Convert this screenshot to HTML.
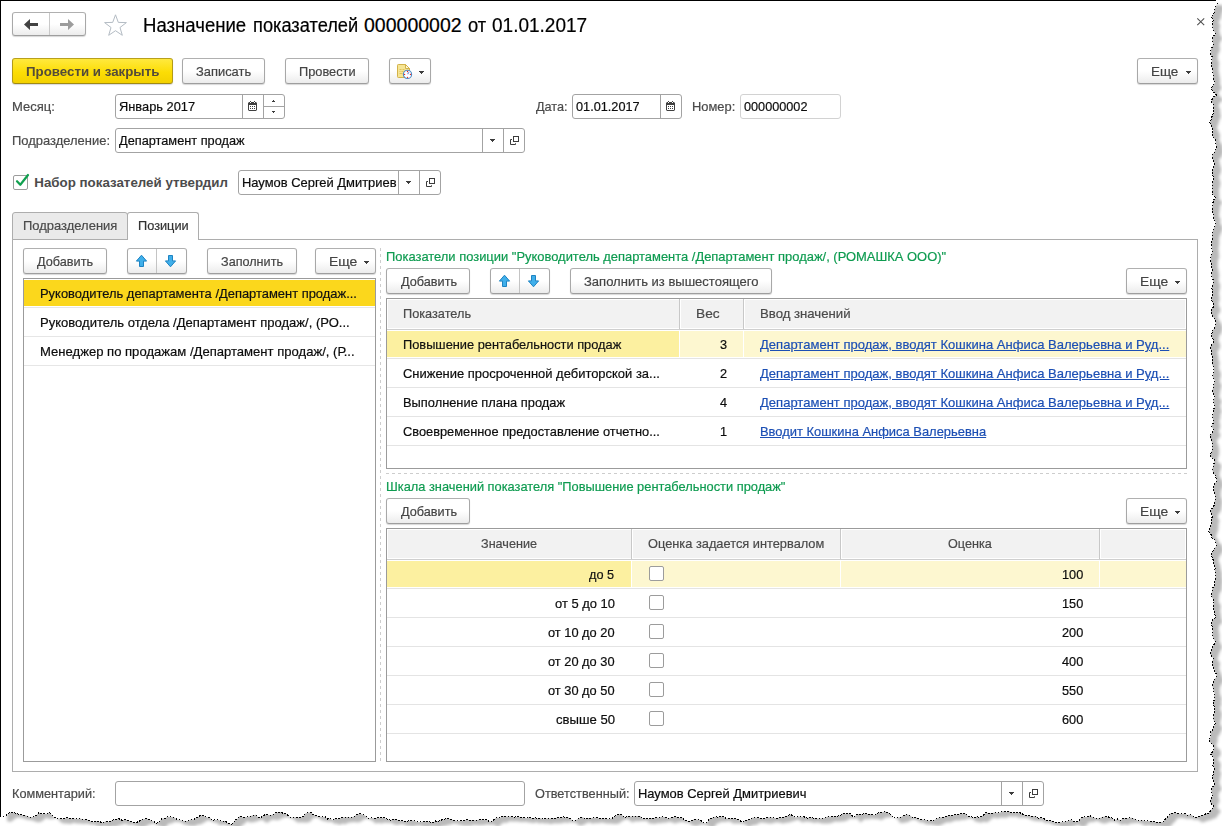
<!DOCTYPE html>
<html lang="ru">
<head>
<meta charset="utf-8">
<title>Назначение показателей 000000002 от 01.01.2017</title>
<style>
*{box-sizing:border-box;margin:0;padding:0}
html,body{width:1222px;height:826px;overflow:hidden;background:#fff}
body{font-family:"Liberation Sans",Arial,sans-serif;font-size:13.33px;color:#4a4a4a;position:relative}
.a{position:absolute}
.t{position:absolute;white-space:nowrap;line-height:16px;transform-origin:0 0;-webkit-text-stroke:0.2px currentColor}
.btn{position:absolute;height:26px;border:1px solid #a8a8a8;border-color:#b0b0b0 #a8a8a8 #9e9e9e;border-radius:3px;background:linear-gradient(#fff 0%,#fff 50%,#ececec 100%);box-shadow:0 1px 1px rgba(0,0,0,.16)}
.btn.y{background:linear-gradient(#ffe93e 0%,#fcdd05 55%,#f3d100 100%);border-color:#b8a01c #b39b17 #a08a12;box-shadow:0 1px 1px rgba(40,40,60,.18)}
.inp{position:absolute;height:25px;border:1px solid #a3a3a3;border-radius:3px;background:#fff}
.v{position:absolute;width:1px;background:#a3a3a3}
.hl{position:absolute;height:1px}
.cb{position:absolute;width:15px;height:15px;border:1px solid #9c9c9c;border-radius:2px;background:#fff}
.tbl{position:absolute;border:1px solid #9b9b9b;background:#fff}
svg{position:absolute;overflow:visible}

</style>
</head>
<body>
<svg style="left:0;top:0" width="1222" height="826" viewBox="0 0 1222 826"><defs><filter id="sh" x="-2%" y="-2%" width="104%" height="104%"><feGaussianBlur stdDeviation="1.6"/></filter></defs><path d="M0 0 L1215.4 0.0 L1217.1 3.4 L1215.4 7.6 L1214.4 10.2 L1214.0 13.6 L1211.5 16.9 L1213.2 20.3 L1212.3 25.4 L1213.2 29.7 L1215.7 33.9 L1213.2 36.4 L1212.3 40.7 L1213.2 44.1 L1212.4 46.8 L1211.0 49.2 L1210.6 54.2 L1212.0 56.6 L1212.0 59.3 L1211.5 64.4 L1212.3 69.5 L1213.2 74.6 L1213.2 79.7 L1214.9 83.1 L1212.3 86.4 L1211.5 89.0 L1214.0 92.4 L1216.6 94.9 L1214.3 96.4 L1212.3 98.3 L1211.5 101.7 L1213.2 104.0 L1213.2 106.8 L1214.0 111.9 L1212.3 115.3 L1211.5 118.6 L1209.8 122.9 L1211.5 126.3 L1213.2 130.5 L1212.3 133.9 L1213.2 137.3 L1215.4 140.0 L1215.9 143.8 L1216.6 147.6 L1215.3 150.0 L1214.3 152.6 L1212.0 154.4 L1212.6 157.4 L1213.2 160.3 L1214.4 164.1 L1213.7 168.0 L1212.0 171.4 L1212.5 174.4 L1213.6 177.5 L1213.2 180.7 L1212.0 184.9 L1212.3 189.2 L1212.3 194.2 L1214.5 195.9 L1215.4 198.5 L1213.2 200.2 L1212.9 204.0 L1212.3 207.8 L1212.0 211.2 L1213.7 214.5 L1213.2 218.0 L1215.7 222.2 L1215.4 225.3 L1214.0 228.1 L1212.3 232.4 L1212.1 235.3 L1212.3 238.3 L1211.5 243.4 L1212.0 248.5 L1212.3 252.7 L1210.8 255.5 L1211.0 258.6 L1210.6 261.2 L1211.5 265.4 L1212.3 270.5 L1211.5 275.6 L1213.2 280.0 L1213.2 282.5 L1212.4 285.5 L1212.0 288.5 L1212.5 291.8 L1212.7 295.3 L1211.4 298.1 L1212.0 301.2 L1213.5 304.0 L1213.2 307.1 L1211.0 309.7 L1211.0 312.8 L1212.3 315.6 L1214.4 318.8 L1215.7 322.4 L1215.4 324.9 L1214.5 328.2 L1212.3 330.8 L1211.5 335.9 L1213.1 339.1 L1213.2 342.7 L1210.3 346.9 L1211.3 350.7 L1211.5 354.6 L1212.7 358.0 L1211.9 361.3 L1212.3 364.7 L1213.8 367.5 L1214.0 370.7 L1213.2 373.6 L1212.7 376.6 L1214.9 380.8 L1213.8 383.7 L1213.2 386.8 L1212.3 391.9 L1213.8 394.3 L1214.9 396.9 L1213.2 400.3 L1213.9 403.8 L1214.9 407.1 L1213.2 409.7 L1213.6 412.8 L1212.3 415.6 L1213.2 420.0 L1213.2 423.2 L1211.5 425.9 L1213.7 430.2 L1212.2 433.1 L1209.8 435.3 L1210.3 437.9 L1211.5 440.3 L1212.1 443.7 L1212.3 447.1 L1212.0 450.3 L1210.8 453.3 L1210.3 456.4 L1212.4 458.1 L1214.4 459.8 L1214.2 462.9 L1213.2 465.8 L1212.3 470.0 L1213.5 473.3 L1215.7 475.9 L1216.6 481.0 L1214.9 483.4 L1214.0 486.1 L1213.7 491.2 L1215.0 494.5 L1215.4 498.0 L1214.7 501.3 L1214.4 504.7 L1213.1 507.3 L1211.2 509.5 L1210.6 512.4 L1212.7 515.8 L1211.6 518.6 L1211.5 521.7 L1211.3 524.7 L1210.3 527.6 L1208.9 531.9 L1211.5 535.3 L1212.0 538.0 L1214.8 539.4 L1215.4 542.0 L1216.6 545.4 L1215.0 548.1 L1213.2 550.5 L1211.9 552.9 L1211.5 555.6 L1213.2 560.0 L1214.0 565.1 L1215.1 568.0 L1214.9 571.0 L1215.7 576.1 L1215.3 579.1 L1214.9 582.0 L1214.8 585.4 L1212.6 588.1 L1212.0 591.4 L1211.5 596.4 L1214.0 600.7 L1213.2 605.8 L1214.0 610.0 L1214.1 612.7 L1215.0 615.1 L1215.7 617.6 L1212.3 620.2 L1211.6 624.0 L1212.3 627.8 L1212.7 631.2 L1212.3 634.6 L1213.0 637.3 L1214.2 639.7 L1215.4 642.2 L1213.7 645.1 L1212.3 648.1 L1211.4 651.1 L1210.3 654.1 L1213.2 658.3 L1212.5 661.1 L1212.3 664.0 L1213.2 666.8 L1214.4 669.3 L1215.1 672.0 L1216.6 674.4 L1215.9 677.8 L1213.7 680.3 L1212.8 683.7 L1212.7 687.1 L1213.5 690.6 L1214.9 693.9 L1213.9 696.9 L1214.9 700.0 L1213.2 701.3 L1213.4 704.8 L1214.9 708.0 L1214.7 711.2 L1214.0 714.3 L1213.2 717.4 L1213.4 720.0 L1215.2 722.2 L1214.9 725.0 L1213.5 727.3 L1212.6 729.9 L1210.6 731.8 L1210.8 734.7 L1210.4 737.6 L1208.9 740.2 L1210.7 743.1 L1213.2 745.3 L1214.0 748.7 L1212.8 751.7 L1210.3 753.8 L1213.2 757.2 L1213.8 759.9 L1213.6 762.6 L1212.7 765.3 L1214.4 768.0 L1213.7 770.7 L1213.1 774.2 L1212.3 777.5 L1213.5 780.9 L1214.9 784.3 L1212.0 787.7 L1211.5 790.6 L1211.8 793.4 L1212.7 796.2 L1210.8 799.3 L1210.3 802.9 L1214.0 806.3 L1212.5 808.0 L1210.5 811.0 L1208.5 813.5 L1206.6 813.5 L1203.9 814.9 L1200.9 815.6 L1198.0 816.7 L1195.0 817.4 L1192.7 815.7 L1190.3 814.6 L1187.2 815.1 L1184.9 813.5 L1181.5 813.9 L1178.2 813.5 L1174.9 812.7 L1169.9 813.5 L1168.7 815.9 L1166.6 817.7 L1164.8 819.7 L1163.2 821.9 L1160.2 822.2 L1157.2 822.5 L1154.2 821.5 L1151.2 821.5 L1148.2 821.0 L1144.9 820.9 L1141.5 820.1 L1138.2 821.0 L1135.0 819.0 L1131.5 817.7 L1128.7 818.1 L1125.9 818.3 L1123.1 818.6 L1120.5 820.3 L1117.5 819.0 L1114.8 820.2 L1111.7 818.0 L1108.1 816.9 L1105.1 816.5 L1102.2 817.1 L1099.4 818.3 L1096.5 818.5 L1093.0 817.3 L1089.8 815.7 L1086.6 817.1 L1083.1 816.9 L1080.7 818.3 L1079.2 820.9 L1076.4 821.9 L1073.5 821.4 L1071.4 819.4 L1068.6 820.7 L1065.7 821.5 L1062.7 821.9 L1059.7 822.4 L1056.8 822.7 L1054.0 822.2 L1051.4 820.7 L1048.7 820.6 L1046.2 820.0 L1043.8 818.7 L1041.4 817.7 L1038.3 818.2 L1035.6 816.1 L1032.6 816.2 L1029.7 816.0 L1026.2 815.6 L1023.1 814.3 L1020.0 812.7 L1017.2 812.8 L1014.5 812.6 L1011.7 812.9 L1009.1 811.3 L1006.3 811.9 L1002.8 811.3 L999.6 812.7 L997.0 812.7 L994.3 812.6 L991.6 813.3 L988.9 813.2 L986.3 812.4 L984.2 814.3 L982.1 816.1 L979.6 817.4 L976.9 816.5 L974.0 817.7 L971.3 816.9 L968.1 816.6 L966.0 813.8 L962.9 813.5 L960.2 813.8 L957.7 814.9 L954.9 814.4 L952.3 815.8 L949.6 815.2 L946.2 816.2 L942.9 817.4 L940.1 817.3 L937.6 818.3 L935.2 819.5 L932.9 820.7 L929.5 820.7 L926.1 820.1 L922.8 819.4 L919.4 819.4 L916.3 817.5 L912.8 817.4 L910.4 815.8 L907.8 814.4 L904.3 815.1 L901.1 816.9 L898.4 817.5 L895.6 818.0 L892.8 817.7 L891.2 814.8 L888.6 812.7 L885.3 811.6 L881.9 812.4 L879.2 812.6 L876.7 813.7 L874.4 815.2 L871.2 814.0 L867.8 814.0 L864.4 813.5 L861.1 814.6 L857.7 814.0 L855.6 815.7 L853.6 817.4 L850.2 813.5 L846.5 813.8 L842.7 813.5 L840.2 815.4 L837.4 816.3 L834.4 816.4 L831.0 816.8 L827.7 816.4 L824.5 817.9 L821.0 818.5 L816.0 818.5 L813.1 818.0 L810.2 817.3 L807.3 818.1 L804.4 817.0 L801.5 816.7 L798.6 816.6 L795.6 817.4 L793.0 816.1 L790.6 814.4 L787.9 815.7 L784.9 816.6 L782.0 817.5 L778.9 817.7 L776.2 818.4 L773.4 817.7 L770.6 817.3 L767.8 817.6 L765.0 818.4 L762.2 818.5 L758.9 818.0 L755.6 817.4 L752.2 817.7 L750.1 819.7 L747.1 819.9 L744.4 820.7 L742.2 822.7 L740.3 820.8 L738.0 819.5 L735.5 818.5 L732.2 818.6 L728.9 818.5 L725.9 818.4 L723.4 816.5 L720.5 816.4 L717.8 817.1 L714.9 816.7 L712.2 817.7 L709.3 818.9 L707.8 821.8 L705.5 823.5 L702.6 822.3 L700.3 820.0 L697.1 819.4 L693.7 819.5 L690.6 821.1 L687.1 821.0 L684.2 819.8 L682.1 817.4 L679.2 818.1 L676.2 816.7 L673.3 817.0 L670.4 817.7 L667.5 818.4 L664.6 817.0 L661.7 816.7 L658.7 817.7 L656.1 817.6 L653.4 818.3 L650.7 818.1 L648.1 819.1 L645.4 818.5 L642.3 818.6 L640.1 816.0 L637.0 816.0 L634.1 816.1 L631.2 816.6 L628.2 816.2 L625.4 817.4 L622.8 815.8 L620.3 814.0 L617.2 814.9 L614.5 816.5 L612.0 818.5 L608.9 818.9 L605.8 818.7 L602.8 818.4 L599.7 818.4 L596.6 817.7 L593.9 817.6 L591.1 818.3 L588.3 818.0 L585.5 818.7 L582.7 817.2 L579.9 818.0 L576.7 819.8 L573.3 821.0 L570.7 819.3 L568.3 817.4 L565.6 817.4 L563.0 816.9 L560.4 818.0 L557.7 817.2 L555.1 818.2 L552.5 818.3 L549.9 818.5 L546.9 818.3 L543.8 819.2 L540.9 818.2 L537.8 818.5 L534.9 817.7 L532.2 818.6 L529.5 817.0 L526.8 818.2 L524.2 817.5 L521.5 817.4 L518.9 816.7 L516.2 816.9 L513.5 817.1 L510.8 816.5 L508.2 816.4 L505.2 816.5 L502.3 816.3 L499.5 817.9 L496.5 817.4 L493.9 819.5 L491.5 821.9 L488.7 821.1 L486.5 819.4 L483.6 820.0 L480.6 819.2 L477.7 820.0 L474.8 820.2 L472.0 820.2 L469.2 820.0 L466.4 819.8 L463.7 820.9 L460.9 820.7 L458.1 821.0 L455.2 820.4 L452.2 819.8 L449.4 818.8 L446.4 818.5 L443.8 819.5 L441.0 820.1 L438.4 821.1 L435.4 821.0 L433.0 822.7 L430.1 822.1 L427.3 821.5 L424.3 821.2 L421.4 821.9 L418.7 822.2 L416.0 821.4 L413.4 820.5 L410.7 820.5 L408.0 821.0 L405.3 821.8 L402.7 821.0 L399.1 820.8 L396.0 819.0 L393.2 819.3 L390.4 820.1 L387.6 819.4 L383.5 817.4 L380.5 817.9 L377.6 817.4 L374.7 818.6 L371.5 817.8 L368.4 818.5 L365.8 816.0 L362.6 814.4 L359.7 813.6 L356.7 814.4 L354.1 816.5 L350.9 817.4 L347.6 817.0 L344.2 817.3 L340.9 817.7 L338.3 819.2 L335.1 818.6 L332.5 820.2 L330.3 818.5 L327.4 819.1 L325.3 816.8 L322.5 816.9 L319.2 816.5 L315.8 815.7 L313.3 814.6 L311.2 812.6 L308.3 812.4 L305.5 813.5 L303.7 816.3 L300.8 817.4 L297.5 817.5 L294.1 817.3 L290.8 817.4 L288.1 815.7 L285.8 813.5 L283.1 813.3 L280.8 811.9 L276.6 812.4 L273.9 814.1 L270.8 815.2 L265.8 814.4 L263.0 815.7 L260.8 817.7 L257.8 817.0 L255.8 814.7 L252.9 815.3 L250.2 816.3 L247.4 816.9 L243.5 817.4 L239.9 816.0 L238.0 818.4 L235.5 820.0 L233.6 822.3 L231.5 824.4 L228.2 823.5 L225.7 821.0 L220.7 821.0 L218.0 819.8 L215.2 819.9 L212.3 820.2 L210.3 818.0 L207.3 817.4 L204.0 816.0 L200.3 815.2 L198.3 817.1 L195.9 818.0 L193.7 819.5 L190.7 819.4 L188.6 821.0 L185.7 821.1 L182.7 820.9 L179.9 819.9 L177.0 819.4 L173.9 817.3 L170.3 816.9 L167.4 816.8 L164.8 818.5 L161.9 818.5 L159.5 821.6 L156.1 823.5 L154.2 821.6 L151.6 820.9 L149.4 819.4 L146.9 818.5 L141.9 819.4 L139.4 821.2 L136.7 822.4 L133.6 822.7 L130.9 821.2 L127.9 820.6 L125.2 819.4 L121.9 820.2 L118.5 818.5 L115.2 819.4 L111.8 820.4 L108.5 821.9 L105.7 821.3 L102.9 822.7 L100.2 821.9 L96.9 820.9 L93.4 822.2 L90.1 821.0 L87.0 819.5 L83.4 819.5 L80.1 818.5 L76.8 818.9 L73.5 818.4 L70.1 818.5 L66.8 817.7 L63.4 819.0 L60.1 818.5 L56.6 818.4 L53.4 816.9 L51.4 814.6 L49.2 812.4 L46.9 813.7 L44.2 814.0 L41.5 813.9 L39.2 812.4 L36.7 815.1 L33.4 816.9 L30.4 817.2 L27.7 816.3 L25.0 815.2 L22.2 815.0 L19.4 814.5 L16.7 813.5 L13.0 812.6 L9.2 812.7 L6.5 815.1 L3.3 816.9 L0.0 816.0 L0 816.0 Z" fill="#000" fill-opacity=".27" filter="url(#sh)" transform="translate(7 5)"/><path d="M0 0 L1215.4 0.0 L1217.1 3.4 L1215.4 7.6 L1214.4 10.2 L1214.0 13.6 L1211.5 16.9 L1213.2 20.3 L1212.3 25.4 L1213.2 29.7 L1215.7 33.9 L1213.2 36.4 L1212.3 40.7 L1213.2 44.1 L1212.4 46.8 L1211.0 49.2 L1210.6 54.2 L1212.0 56.6 L1212.0 59.3 L1211.5 64.4 L1212.3 69.5 L1213.2 74.6 L1213.2 79.7 L1214.9 83.1 L1212.3 86.4 L1211.5 89.0 L1214.0 92.4 L1216.6 94.9 L1214.3 96.4 L1212.3 98.3 L1211.5 101.7 L1213.2 104.0 L1213.2 106.8 L1214.0 111.9 L1212.3 115.3 L1211.5 118.6 L1209.8 122.9 L1211.5 126.3 L1213.2 130.5 L1212.3 133.9 L1213.2 137.3 L1215.4 140.0 L1215.9 143.8 L1216.6 147.6 L1215.3 150.0 L1214.3 152.6 L1212.0 154.4 L1212.6 157.4 L1213.2 160.3 L1214.4 164.1 L1213.7 168.0 L1212.0 171.4 L1212.5 174.4 L1213.6 177.5 L1213.2 180.7 L1212.0 184.9 L1212.3 189.2 L1212.3 194.2 L1214.5 195.9 L1215.4 198.5 L1213.2 200.2 L1212.9 204.0 L1212.3 207.8 L1212.0 211.2 L1213.7 214.5 L1213.2 218.0 L1215.7 222.2 L1215.4 225.3 L1214.0 228.1 L1212.3 232.4 L1212.1 235.3 L1212.3 238.3 L1211.5 243.4 L1212.0 248.5 L1212.3 252.7 L1210.8 255.5 L1211.0 258.6 L1210.6 261.2 L1211.5 265.4 L1212.3 270.5 L1211.5 275.6 L1213.2 280.0 L1213.2 282.5 L1212.4 285.5 L1212.0 288.5 L1212.5 291.8 L1212.7 295.3 L1211.4 298.1 L1212.0 301.2 L1213.5 304.0 L1213.2 307.1 L1211.0 309.7 L1211.0 312.8 L1212.3 315.6 L1214.4 318.8 L1215.7 322.4 L1215.4 324.9 L1214.5 328.2 L1212.3 330.8 L1211.5 335.9 L1213.1 339.1 L1213.2 342.7 L1210.3 346.9 L1211.3 350.7 L1211.5 354.6 L1212.7 358.0 L1211.9 361.3 L1212.3 364.7 L1213.8 367.5 L1214.0 370.7 L1213.2 373.6 L1212.7 376.6 L1214.9 380.8 L1213.8 383.7 L1213.2 386.8 L1212.3 391.9 L1213.8 394.3 L1214.9 396.9 L1213.2 400.3 L1213.9 403.8 L1214.9 407.1 L1213.2 409.7 L1213.6 412.8 L1212.3 415.6 L1213.2 420.0 L1213.2 423.2 L1211.5 425.9 L1213.7 430.2 L1212.2 433.1 L1209.8 435.3 L1210.3 437.9 L1211.5 440.3 L1212.1 443.7 L1212.3 447.1 L1212.0 450.3 L1210.8 453.3 L1210.3 456.4 L1212.4 458.1 L1214.4 459.8 L1214.2 462.9 L1213.2 465.8 L1212.3 470.0 L1213.5 473.3 L1215.7 475.9 L1216.6 481.0 L1214.9 483.4 L1214.0 486.1 L1213.7 491.2 L1215.0 494.5 L1215.4 498.0 L1214.7 501.3 L1214.4 504.7 L1213.1 507.3 L1211.2 509.5 L1210.6 512.4 L1212.7 515.8 L1211.6 518.6 L1211.5 521.7 L1211.3 524.7 L1210.3 527.6 L1208.9 531.9 L1211.5 535.3 L1212.0 538.0 L1214.8 539.4 L1215.4 542.0 L1216.6 545.4 L1215.0 548.1 L1213.2 550.5 L1211.9 552.9 L1211.5 555.6 L1213.2 560.0 L1214.0 565.1 L1215.1 568.0 L1214.9 571.0 L1215.7 576.1 L1215.3 579.1 L1214.9 582.0 L1214.8 585.4 L1212.6 588.1 L1212.0 591.4 L1211.5 596.4 L1214.0 600.7 L1213.2 605.8 L1214.0 610.0 L1214.1 612.7 L1215.0 615.1 L1215.7 617.6 L1212.3 620.2 L1211.6 624.0 L1212.3 627.8 L1212.7 631.2 L1212.3 634.6 L1213.0 637.3 L1214.2 639.7 L1215.4 642.2 L1213.7 645.1 L1212.3 648.1 L1211.4 651.1 L1210.3 654.1 L1213.2 658.3 L1212.5 661.1 L1212.3 664.0 L1213.2 666.8 L1214.4 669.3 L1215.1 672.0 L1216.6 674.4 L1215.9 677.8 L1213.7 680.3 L1212.8 683.7 L1212.7 687.1 L1213.5 690.6 L1214.9 693.9 L1213.9 696.9 L1214.9 700.0 L1213.2 701.3 L1213.4 704.8 L1214.9 708.0 L1214.7 711.2 L1214.0 714.3 L1213.2 717.4 L1213.4 720.0 L1215.2 722.2 L1214.9 725.0 L1213.5 727.3 L1212.6 729.9 L1210.6 731.8 L1210.8 734.7 L1210.4 737.6 L1208.9 740.2 L1210.7 743.1 L1213.2 745.3 L1214.0 748.7 L1212.8 751.7 L1210.3 753.8 L1213.2 757.2 L1213.8 759.9 L1213.6 762.6 L1212.7 765.3 L1214.4 768.0 L1213.7 770.7 L1213.1 774.2 L1212.3 777.5 L1213.5 780.9 L1214.9 784.3 L1212.0 787.7 L1211.5 790.6 L1211.8 793.4 L1212.7 796.2 L1210.8 799.3 L1210.3 802.9 L1214.0 806.3 L1212.5 808.0 L1210.5 811.0 L1208.5 813.5 L1206.6 813.5 L1203.9 814.9 L1200.9 815.6 L1198.0 816.7 L1195.0 817.4 L1192.7 815.7 L1190.3 814.6 L1187.2 815.1 L1184.9 813.5 L1181.5 813.9 L1178.2 813.5 L1174.9 812.7 L1169.9 813.5 L1168.7 815.9 L1166.6 817.7 L1164.8 819.7 L1163.2 821.9 L1160.2 822.2 L1157.2 822.5 L1154.2 821.5 L1151.2 821.5 L1148.2 821.0 L1144.9 820.9 L1141.5 820.1 L1138.2 821.0 L1135.0 819.0 L1131.5 817.7 L1128.7 818.1 L1125.9 818.3 L1123.1 818.6 L1120.5 820.3 L1117.5 819.0 L1114.8 820.2 L1111.7 818.0 L1108.1 816.9 L1105.1 816.5 L1102.2 817.1 L1099.4 818.3 L1096.5 818.5 L1093.0 817.3 L1089.8 815.7 L1086.6 817.1 L1083.1 816.9 L1080.7 818.3 L1079.2 820.9 L1076.4 821.9 L1073.5 821.4 L1071.4 819.4 L1068.6 820.7 L1065.7 821.5 L1062.7 821.9 L1059.7 822.4 L1056.8 822.7 L1054.0 822.2 L1051.4 820.7 L1048.7 820.6 L1046.2 820.0 L1043.8 818.7 L1041.4 817.7 L1038.3 818.2 L1035.6 816.1 L1032.6 816.2 L1029.7 816.0 L1026.2 815.6 L1023.1 814.3 L1020.0 812.7 L1017.2 812.8 L1014.5 812.6 L1011.7 812.9 L1009.1 811.3 L1006.3 811.9 L1002.8 811.3 L999.6 812.7 L997.0 812.7 L994.3 812.6 L991.6 813.3 L988.9 813.2 L986.3 812.4 L984.2 814.3 L982.1 816.1 L979.6 817.4 L976.9 816.5 L974.0 817.7 L971.3 816.9 L968.1 816.6 L966.0 813.8 L962.9 813.5 L960.2 813.8 L957.7 814.9 L954.9 814.4 L952.3 815.8 L949.6 815.2 L946.2 816.2 L942.9 817.4 L940.1 817.3 L937.6 818.3 L935.2 819.5 L932.9 820.7 L929.5 820.7 L926.1 820.1 L922.8 819.4 L919.4 819.4 L916.3 817.5 L912.8 817.4 L910.4 815.8 L907.8 814.4 L904.3 815.1 L901.1 816.9 L898.4 817.5 L895.6 818.0 L892.8 817.7 L891.2 814.8 L888.6 812.7 L885.3 811.6 L881.9 812.4 L879.2 812.6 L876.7 813.7 L874.4 815.2 L871.2 814.0 L867.8 814.0 L864.4 813.5 L861.1 814.6 L857.7 814.0 L855.6 815.7 L853.6 817.4 L850.2 813.5 L846.5 813.8 L842.7 813.5 L840.2 815.4 L837.4 816.3 L834.4 816.4 L831.0 816.8 L827.7 816.4 L824.5 817.9 L821.0 818.5 L816.0 818.5 L813.1 818.0 L810.2 817.3 L807.3 818.1 L804.4 817.0 L801.5 816.7 L798.6 816.6 L795.6 817.4 L793.0 816.1 L790.6 814.4 L787.9 815.7 L784.9 816.6 L782.0 817.5 L778.9 817.7 L776.2 818.4 L773.4 817.7 L770.6 817.3 L767.8 817.6 L765.0 818.4 L762.2 818.5 L758.9 818.0 L755.6 817.4 L752.2 817.7 L750.1 819.7 L747.1 819.9 L744.4 820.7 L742.2 822.7 L740.3 820.8 L738.0 819.5 L735.5 818.5 L732.2 818.6 L728.9 818.5 L725.9 818.4 L723.4 816.5 L720.5 816.4 L717.8 817.1 L714.9 816.7 L712.2 817.7 L709.3 818.9 L707.8 821.8 L705.5 823.5 L702.6 822.3 L700.3 820.0 L697.1 819.4 L693.7 819.5 L690.6 821.1 L687.1 821.0 L684.2 819.8 L682.1 817.4 L679.2 818.1 L676.2 816.7 L673.3 817.0 L670.4 817.7 L667.5 818.4 L664.6 817.0 L661.7 816.7 L658.7 817.7 L656.1 817.6 L653.4 818.3 L650.7 818.1 L648.1 819.1 L645.4 818.5 L642.3 818.6 L640.1 816.0 L637.0 816.0 L634.1 816.1 L631.2 816.6 L628.2 816.2 L625.4 817.4 L622.8 815.8 L620.3 814.0 L617.2 814.9 L614.5 816.5 L612.0 818.5 L608.9 818.9 L605.8 818.7 L602.8 818.4 L599.7 818.4 L596.6 817.7 L593.9 817.6 L591.1 818.3 L588.3 818.0 L585.5 818.7 L582.7 817.2 L579.9 818.0 L576.7 819.8 L573.3 821.0 L570.7 819.3 L568.3 817.4 L565.6 817.4 L563.0 816.9 L560.4 818.0 L557.7 817.2 L555.1 818.2 L552.5 818.3 L549.9 818.5 L546.9 818.3 L543.8 819.2 L540.9 818.2 L537.8 818.5 L534.9 817.7 L532.2 818.6 L529.5 817.0 L526.8 818.2 L524.2 817.5 L521.5 817.4 L518.9 816.7 L516.2 816.9 L513.5 817.1 L510.8 816.5 L508.2 816.4 L505.2 816.5 L502.3 816.3 L499.5 817.9 L496.5 817.4 L493.9 819.5 L491.5 821.9 L488.7 821.1 L486.5 819.4 L483.6 820.0 L480.6 819.2 L477.7 820.0 L474.8 820.2 L472.0 820.2 L469.2 820.0 L466.4 819.8 L463.7 820.9 L460.9 820.7 L458.1 821.0 L455.2 820.4 L452.2 819.8 L449.4 818.8 L446.4 818.5 L443.8 819.5 L441.0 820.1 L438.4 821.1 L435.4 821.0 L433.0 822.7 L430.1 822.1 L427.3 821.5 L424.3 821.2 L421.4 821.9 L418.7 822.2 L416.0 821.4 L413.4 820.5 L410.7 820.5 L408.0 821.0 L405.3 821.8 L402.7 821.0 L399.1 820.8 L396.0 819.0 L393.2 819.3 L390.4 820.1 L387.6 819.4 L383.5 817.4 L380.5 817.9 L377.6 817.4 L374.7 818.6 L371.5 817.8 L368.4 818.5 L365.8 816.0 L362.6 814.4 L359.7 813.6 L356.7 814.4 L354.1 816.5 L350.9 817.4 L347.6 817.0 L344.2 817.3 L340.9 817.7 L338.3 819.2 L335.1 818.6 L332.5 820.2 L330.3 818.5 L327.4 819.1 L325.3 816.8 L322.5 816.9 L319.2 816.5 L315.8 815.7 L313.3 814.6 L311.2 812.6 L308.3 812.4 L305.5 813.5 L303.7 816.3 L300.8 817.4 L297.5 817.5 L294.1 817.3 L290.8 817.4 L288.1 815.7 L285.8 813.5 L283.1 813.3 L280.8 811.9 L276.6 812.4 L273.9 814.1 L270.8 815.2 L265.8 814.4 L263.0 815.7 L260.8 817.7 L257.8 817.0 L255.8 814.7 L252.9 815.3 L250.2 816.3 L247.4 816.9 L243.5 817.4 L239.9 816.0 L238.0 818.4 L235.5 820.0 L233.6 822.3 L231.5 824.4 L228.2 823.5 L225.7 821.0 L220.7 821.0 L218.0 819.8 L215.2 819.9 L212.3 820.2 L210.3 818.0 L207.3 817.4 L204.0 816.0 L200.3 815.2 L198.3 817.1 L195.9 818.0 L193.7 819.5 L190.7 819.4 L188.6 821.0 L185.7 821.1 L182.7 820.9 L179.9 819.9 L177.0 819.4 L173.9 817.3 L170.3 816.9 L167.4 816.8 L164.8 818.5 L161.9 818.5 L159.5 821.6 L156.1 823.5 L154.2 821.6 L151.6 820.9 L149.4 819.4 L146.9 818.5 L141.9 819.4 L139.4 821.2 L136.7 822.4 L133.6 822.7 L130.9 821.2 L127.9 820.6 L125.2 819.4 L121.9 820.2 L118.5 818.5 L115.2 819.4 L111.8 820.4 L108.5 821.9 L105.7 821.3 L102.9 822.7 L100.2 821.9 L96.9 820.9 L93.4 822.2 L90.1 821.0 L87.0 819.5 L83.4 819.5 L80.1 818.5 L76.8 818.9 L73.5 818.4 L70.1 818.5 L66.8 817.7 L63.4 819.0 L60.1 818.5 L56.6 818.4 L53.4 816.9 L51.4 814.6 L49.2 812.4 L46.9 813.7 L44.2 814.0 L41.5 813.9 L39.2 812.4 L36.7 815.1 L33.4 816.9 L30.4 817.2 L27.7 816.3 L25.0 815.2 L22.2 815.0 L19.4 814.5 L16.7 813.5 L13.0 812.6 L9.2 812.7 L6.5 815.1 L3.3 816.9 L0.0 816.0 L0 816.0 Z" fill="#fff"/></svg>
<div class="a" style="left:0;top:0;width:1215px;height:1px;background:#000"></div>
<div class="a" style="left:0;top:0;width:1px;height:816px;background:#000"></div>
<div class="btn" style="left:12px;top:12px;width:74px;height:24px"></div>
<div class="v" style="left:49px;top:13px;height:22px;background:#c9c9c9"></div>
<svg style="left:12px;top:12px" width="74" height="24" viewBox="0 0 74 24"><path d="M12 12.5 L18 7 V11 H26 V14 H18 V18 Z" fill="#414141"/><path d="M62 12.5 L56 7 V11 H48 V14 H56 V18 Z" fill="#9c9c9c"/></svg>
<svg style="left:103px;top:13px" width="25" height="24" viewBox="0 0 25 24"><path d="M12.5 1.8 L15.3 9.4 L23.4 9.6 L17 14.5 L19.3 22.3 L12.5 17.7 L5.7 22.3 L8 14.5 L1.6 9.6 L9.7 9.4 Z" fill="#fff" stroke="#b4bcc4" stroke-width="1" stroke-linejoin="miter"/></svg>
<svg style="left:1197px;top:18px" width="8" height="8" viewBox="0 0 8 8"><path d="M0.3 0.3 L7.2 7.2 M7.2 0.3 L0.3 7.2" stroke="#505050" stroke-width="1.05" fill="none"/></svg>
<div class="btn y" style="left:12px;top:58px;width:161px;height:26px"></div>
<div class="btn" style="left:182px;top:58px;width:83px;height:26px"></div>
<div class="btn" style="left:285px;top:58px;width:84px;height:26px"></div>
<div class="btn" style="left:389px;top:58px;width:42px;height:26px"></div>
<div class="btn" style="left:1137px;top:58px;width:61px;height:26px"></div>
<svg style="left:397px;top:63px" width="16" height="17" viewBox="0 0 16 17"><path d="M1.3 1.5 H8.5 L12.5 5.5 V13.7 Q12.5 14.5 11.7 14.5 H1.3 Q0.5 14.5 0.5 13.7 V2.3 Q0.5 1.5 1.3 1.5 Z" fill="#f6e594" stroke="#d3b24a" stroke-width="1"/><path d="M8.5 1.5 V5.5 H12.5 Z" fill="#fdf6d4" stroke="#d3b24a" stroke-width="1" stroke-linejoin="round"/><path d="M2.5 6.5h2M5.5 6.5h2M2.5 8.5h1M4.5 8.5h2M2.5 10.5h3" stroke="#e0c35c" stroke-width="1"/><circle cx="10.5" cy="11.4" r="4.1" fill="#fff" stroke="#4f8ac4" stroke-width="1.1"/><path d="M10.6 11.3 L12 9" stroke="#7a96dc" stroke-width="1.2"/><circle cx="10.5" cy="8.5" r=".65" fill="#e8181c"/><circle cx="10.5" cy="14.3" r=".65" fill="#e8181c"/><circle cx="7.6" cy="11.4" r=".65" fill="#e8181c"/><circle cx="13.4" cy="11.4" r=".65" fill="#e8181c"/></svg>
<svg style="left:419px;top:71px" width="5" height="3" viewBox="0 0 5 3" shape-rendering="crispEdges"><path d="M0 0h5v1h-5zM1 1h3v1h-3zM2 2h1v1h-1z" fill="#3c3c3c"/></svg>
<svg style="left:1186px;top:71px" width="5" height="3" viewBox="0 0 5 3" shape-rendering="crispEdges"><path d="M0 0h5v1h-5zM1 1h3v1h-3zM2 2h1v1h-1z" fill="#3c3c3c"/></svg>
<div class="inp" style="left:115px;top:94px;width:170px"></div>
<div class="v" style="left:242px;top:95px;height:23px;background:#a3a3a3"></div>
<div class="v" style="left:263px;top:95px;height:23px;background:#a3a3a3"></div>
<div class="hl" style="left:264px;top:106px;width:20px;background:#a3a3a3"></div>
<svg style="left:248px;top:101px" width="9" height="10" viewBox="0 0 9 10" shape-rendering="crispEdges"><path d="M2 0h1v1h-1zM6 0h1v1h-1zM0 1h2v1h-2zM3 1h3v1h-3zM7 1h2v1h-2zM0 2h9v2h-9zM0 4h1v5h-1zM8 4h1v5h-1zM0 9h9v1h-9zM2 5h1v1h-1zM4 5h1v1h-1zM6 5h1v1h-1zM2 7h1v1h-1zM4 7h1v1h-1zM6 7h1v1h-1z" fill="#404040"/><path d="M0 1h1v1h-1zM8 1h1v1h-1zM0 9h1v1h-1zM8 9h1v1h-1z" fill="#fff" fill-opacity=".55"/></svg>
<svg style="left:272px;top:100px" width="3" height="13" viewBox="0 0 3 13" shape-rendering="crispEdges"><path d="M1 0h1v1h-1zM0 1h3v1h-3zM0 11h3v1h-3zM1 12h1v1h-1z" fill="#3c3c3c"/></svg>
<div class="inp" style="left:572px;top:94px;width:110px"></div>
<div class="v" style="left:660px;top:95px;height:23px;background:#a3a3a3"></div>
<svg style="left:666px;top:101px" width="9" height="10" viewBox="0 0 9 10" shape-rendering="crispEdges"><path d="M2 0h1v1h-1zM6 0h1v1h-1zM0 1h2v1h-2zM3 1h3v1h-3zM7 1h2v1h-2zM0 2h9v2h-9zM0 4h1v5h-1zM8 4h1v5h-1zM0 9h9v1h-9zM2 5h1v1h-1zM4 5h1v1h-1zM6 5h1v1h-1zM2 7h1v1h-1zM4 7h1v1h-1zM6 7h1v1h-1z" fill="#404040"/><path d="M0 1h1v1h-1zM8 1h1v1h-1zM0 9h1v1h-1zM8 9h1v1h-1z" fill="#fff" fill-opacity=".55"/></svg>
<div class="inp" style="left:740px;top:94px;width:101px;border-color:#d2d2d2"></div>
<div class="inp" style="left:115px;top:128px;width:410px"></div>
<div class="v" style="left:482px;top:129px;height:23px;background:#a3a3a3"></div>
<div class="v" style="left:503px;top:129px;height:23px;background:#a3a3a3"></div>
<svg style="left:490px;top:139px" width="5" height="3" viewBox="0 0 5 3" shape-rendering="crispEdges"><path d="M0 0h5v1h-5zM1 1h3v1h-3zM2 2h1v1h-1z" fill="#3c3c3c"/></svg>
<svg style="left:510px;top:136px" width="9" height="9" viewBox="0 0 9 9"><path d="M2 3.5H0.5V8.5H5.5V7.3" fill="none" stroke="#3c3c3c" stroke-width="1"/><rect x="3.5" y="0.5" width="5" height="5" fill="none" stroke="#3c3c3c" stroke-width="1"/></svg>
<div class="cb" style="left:13px;top:175px"></div>
<svg style="left:13px;top:172px" width="17" height="17" viewBox="0 0 17 17"><path d="M4 9.2 L7.3 12.8 L15 3" stroke="#10a04f" stroke-width="2.2" fill="none" stroke-linecap="round" stroke-linejoin="round"/></svg>
<div class="inp" style="left:238px;top:170px;width:203px"></div>
<div class="v" style="left:398px;top:171px;height:23px;background:#a3a3a3"></div>
<div class="v" style="left:419px;top:171px;height:23px;background:#a3a3a3"></div>
<svg style="left:406px;top:181px" width="5" height="3" viewBox="0 0 5 3" shape-rendering="crispEdges"><path d="M0 0h5v1h-5zM1 1h3v1h-3zM2 2h1v1h-1z" fill="#3c3c3c"/></svg>
<svg style="left:426px;top:178px" width="9" height="9" viewBox="0 0 9 9"><path d="M2 3.5H0.5V8.5H5.5V7.3" fill="none" stroke="#3c3c3c" stroke-width="1"/><rect x="3.5" y="0.5" width="5" height="5" fill="none" stroke="#3c3c3c" stroke-width="1"/></svg>
<div class="a" style="left:12px;top:239px;width:1186px;height:533px;border:1px solid #adadad;background:#fff"></div>
<div class="a" style="left:12px;top:212px;width:116px;height:28px;border:1px solid #adadad;border-radius:3px 3px 0 0;background:#eaeaea"></div>
<div class="a" style="left:127px;top:212px;width:72px;height:28px;border:1px solid #adadad;border-bottom:none;border-radius:3px 3px 0 0;background:#fff"></div>
<div class="btn" style="left:23px;top:248px;width:84px;height:26px"></div>
<div class="btn" style="left:127px;top:248px;width:60px;height:26px"></div>
<div class="v" style="left:156px;top:249px;height:24px;background:#c4c4c4"></div>
<svg style="left:127px;top:248px" width="60" height="25" viewBox="0 0 60 25"><path d="M14.5 7.2 L19.6 13.1 H16.5 V18.5 H12.5 V13.1 H9.4 Z" fill="#40afea" stroke="#1d83c2" stroke-width="1" stroke-linejoin="round"/><path d="M43.5 18.8 L48.6 12.9 H45.5 V7.5 H41.5 V12.9 H38.4 Z" fill="#40afea" stroke="#1d83c2" stroke-width="1" stroke-linejoin="round"/></svg>
<div class="btn" style="left:207px;top:248px;width:90px;height:26px"></div>
<div class="btn" style="left:315px;top:248px;width:61px;height:26px"></div>
<svg style="left:364px;top:261px" width="5" height="3" viewBox="0 0 5 3" shape-rendering="crispEdges"><path d="M0 0h5v1h-5zM1 1h3v1h-3zM2 2h1v1h-1z" fill="#3c3c3c"/></svg>
<div class="tbl" style="left:23px;top:278px;width:353px;height:484px"></div>
<div class="a" style="left:24px;top:280px;width:351px;height:26px;background:#fbd71c"></div>
<div class="hl" style="left:24px;top:307px;width:351px;background:#e6e6e6"></div>
<div class="hl" style="left:24px;top:336px;width:351px;background:#e6e6e6"></div>
<div class="hl" style="left:24px;top:365px;width:351px;background:#e6e6e6"></div>
<div class="a" style="left:380px;top:248px;width:1px;height:513px;background:repeating-linear-gradient(to bottom,#cdcdcd 0,#cdcdcd 3px,transparent 3px,transparent 6px)"></div>
<div class="btn" style="left:386px;top:268px;width:84px;height:26px"></div>
<div class="btn" style="left:490px;top:268px;width:60px;height:26px"></div>
<div class="v" style="left:519px;top:269px;height:24px;background:#c4c4c4"></div>
<svg style="left:490px;top:268px" width="60" height="25" viewBox="0 0 60 25"><path d="M14.5 7.2 L19.6 13.1 H16.5 V18.5 H12.5 V13.1 H9.4 Z" fill="#40afea" stroke="#1d83c2" stroke-width="1" stroke-linejoin="round"/><path d="M43.5 18.8 L48.6 12.9 H45.5 V7.5 H41.5 V12.9 H38.4 Z" fill="#40afea" stroke="#1d83c2" stroke-width="1" stroke-linejoin="round"/></svg>
<div class="btn" style="left:570px;top:268px;width:202px;height:26px"></div>
<div class="btn" style="left:1126px;top:268px;width:61px;height:26px"></div>
<svg style="left:1175px;top:281px" width="5" height="3" viewBox="0 0 5 3" shape-rendering="crispEdges"><path d="M0 0h5v1h-5zM1 1h3v1h-3zM2 2h1v1h-1z" fill="#3c3c3c"/></svg>
<div class="tbl" style="left:386px;top:298px;width:801px;height:171px"></div>
<div class="a" style="left:388px;top:300px;width:797px;height:28px;background:#f2f2f2"></div>
<div class="hl" style="left:387px;top:329px;width:799px;background:#cfcfcf"></div>
<div class="v" style="left:679px;top:299px;height:30px;background:#c8c8c8"></div>
<div class="v" style="left:680px;top:299px;height:30px;background:#fff"></div>
<div class="v" style="left:743px;top:299px;height:30px;background:#c8c8c8"></div>
<div class="v" style="left:744px;top:299px;height:30px;background:#fff"></div>
<div class="a" style="left:387px;top:331px;width:292px;height:26px;background:#fcf0a0"></div>
<div class="a" style="left:680px;top:331px;width:63px;height:26px;background:#fdf7d0"></div>
<div class="a" style="left:744px;top:331px;width:442px;height:26px;background:#fdf7d0"></div>
<div class="hl" style="left:387px;top:358px;width:799px;background:#e4e4e4"></div>
<div class="hl" style="left:387px;top:387px;width:799px;background:#e4e4e4"></div>
<div class="hl" style="left:387px;top:416px;width:799px;background:#e4e4e4"></div>
<div class="hl" style="left:387px;top:445px;width:799px;background:#e4e4e4"></div>
<div class="a" style="left:386px;top:473px;width:801px;height:1px;background:repeating-linear-gradient(to right,#cdcdcd 0,#cdcdcd 3px,transparent 3px,transparent 6px)"></div>
<div class="btn" style="left:386px;top:498px;width:84px;height:26px"></div>
<div class="btn" style="left:1126px;top:498px;width:61px;height:26px"></div>
<svg style="left:1175px;top:511px" width="5" height="3" viewBox="0 0 5 3" shape-rendering="crispEdges"><path d="M0 0h5v1h-5zM1 1h3v1h-3zM2 2h1v1h-1z" fill="#3c3c3c"/></svg>
<div class="tbl" style="left:386px;top:528px;width:801px;height:234px"></div>
<div class="a" style="left:388px;top:530px;width:797px;height:28px;background:#f2f2f2"></div>
<div class="hl" style="left:387px;top:559px;width:799px;background:#cfcfcf"></div>
<div class="v" style="left:631px;top:529px;height:30px;background:#c8c8c8"></div>
<div class="v" style="left:632px;top:529px;height:30px;background:#fff"></div>
<div class="v" style="left:840px;top:529px;height:30px;background:#c8c8c8"></div>
<div class="v" style="left:841px;top:529px;height:30px;background:#fff"></div>
<div class="v" style="left:1099px;top:529px;height:30px;background:#c8c8c8"></div>
<div class="v" style="left:1100px;top:529px;height:30px;background:#fff"></div>
<div class="a" style="left:387px;top:561px;width:244px;height:26px;background:#fcf0a0"></div>
<div class="a" style="left:632px;top:561px;width:208px;height:26px;background:#fdf7d0"></div>
<div class="a" style="left:841px;top:561px;width:258px;height:26px;background:#fdf7d0"></div>
<div class="a" style="left:1100px;top:561px;width:86px;height:26px;background:#fdf7d0"></div>
<div class="hl" style="left:387px;top:588px;width:799px;background:#e4e4e4"></div>
<div class="cb" style="left:649px;top:566px"></div>
<div class="hl" style="left:387px;top:617px;width:799px;background:#e4e4e4"></div>
<div class="cb" style="left:649px;top:595px"></div>
<div class="hl" style="left:387px;top:646px;width:799px;background:#e4e4e4"></div>
<div class="cb" style="left:649px;top:624px"></div>
<div class="hl" style="left:387px;top:675px;width:799px;background:#e4e4e4"></div>
<div class="cb" style="left:649px;top:653px"></div>
<div class="hl" style="left:387px;top:704px;width:799px;background:#e4e4e4"></div>
<div class="cb" style="left:649px;top:682px"></div>
<div class="hl" style="left:387px;top:733px;width:799px;background:#e4e4e4"></div>
<div class="cb" style="left:649px;top:711px"></div>
<div class="inp" style="left:115px;top:781px;width:410px"></div>
<div class="inp" style="left:634px;top:781px;width:410px"></div>
<div class="v" style="left:1001px;top:782px;height:23px;background:#a3a3a3"></div>
<div class="v" style="left:1022px;top:782px;height:23px;background:#a3a3a3"></div>
<svg style="left:1009px;top:792px" width="5" height="3" viewBox="0 0 5 3" shape-rendering="crispEdges"><path d="M0 0h5v1h-5zM1 1h3v1h-3zM2 2h1v1h-1z" fill="#3c3c3c"/></svg>
<svg style="left:1029px;top:789px" width="9" height="9" viewBox="0 0 9 9"><path d="M2 3.5H0.5V8.5H5.5V7.3" fill="none" stroke="#3c3c3c" stroke-width="1"/><rect x="3.5" y="0.5" width="5" height="5" fill="none" stroke="#3c3c3c" stroke-width="1"/></svg>
<!-- text -->
<div class="a" style="left:0;top:0"><span class="t" style="left:143.06px;top:13px;color:#000;transform:scaleX(0.9522);font-size:19.5px;line-height:24px">Назначение</span> <span class="t" style="left:253.02px;top:13px;color:#000;transform:scaleX(0.9359);font-size:19.5px;line-height:24px">показателей</span> <span class="t" style="left:364.00px;top:13px;color:#000;transform:scaleX(1.0000);font-size:19.5px;line-height:24px">000000002</span> <span class="t" style="left:467.72px;top:13px;color:#000;transform:scaleX(0.9415);font-size:19.5px;line-height:24px">от</span> <span class="t" style="left:492.21px;top:13px;color:#000;transform:scaleX(0.9742);font-size:19.5px;line-height:24px">01.01.2017</span></div>
<div class="t" style="left:26.20px;top:64px;color:#534b3a;transform:scaleX(0.9985);font-weight:bold;-webkit-text-stroke:0">Провести и закрыть</div>
<div class="t" style="left:196.11px;top:64px;color:#444;transform:scaleX(0.9677)">Записать</div>
<div class="t" style="left:298.71px;top:64px;color:#444;transform:scaleX(0.9602)">Провести</div>
<div class="t" style="left:1151.20px;top:64px;color:#444;transform:scaleX(1.0075)">Еще</div>
<div class="t" style="left:12.11px;top:99px;color:#4a4a4a;transform:scaleX(0.9743)">Месяц:</div>
<div class="t" style="left:118.51px;top:99px;color:#0c0c0c;transform:scaleX(0.9632)">Январь 2017</div>
<div class="t" style="left:535.87px;top:99px;color:#4a4a4a;transform:scaleX(0.9512)">Дата:</div>
<div class="t" style="left:576.21px;top:99px;color:#0c0c0c;transform:scaleX(0.9544)">01.01.2017</div>
<div class="t" style="left:691.81px;top:99px;color:#4a4a4a;transform:scaleX(0.9680)">Номер:</div>
<div class="t" style="left:744.11px;top:99px;color:#0c0c0c;transform:scaleX(0.9514)">000000002</div>
<div class="t" style="left:12.01px;top:133px;color:#4a4a4a;transform:scaleX(0.9719)">Подразделение:</div>
<div class="t" style="left:119.47px;top:133px;color:#0c0c0c;transform:scaleX(0.9575)">Департамент продаж</div>
<div class="t" style="left:34.30px;top:175px;color:#4c4c4c;transform:scaleX(1.0000);font-weight:bold;-webkit-text-stroke:0">Набор показателей утвердил</div>
<div class="a" style="left:239px;top:171px;width:158px;height:23px;overflow:hidden"><div class="t" style="left:3.31px;top:4px;color:#0c0c0c;transform:scaleX(0.9693)">Наумов Сергей Дмитриевич</div></div>
<div class="t" style="left:22.91px;top:218px;color:#4a4a4a;transform:scaleX(0.9729)">Подразделения</div>
<div class="t" style="left:137.91px;top:218px;color:#333;transform:scaleX(0.9575)">Позиции</div>
<div class="t" style="left:37.47px;top:254px;color:#444;transform:scaleX(0.9524)">Добавить</div>
<div class="t" style="left:220.72px;top:254px;color:#444;transform:scaleX(0.9475)">Заполнить</div>
<div class="t" style="left:328.69px;top:254px;color:#444;transform:scaleX(1.0448)">Еще</div>
<div class="t" style="left:40.01px;top:286px;color:#111;transform:scaleX(0.9696)">Руководитель департамента /Департамент продаж...</div>
<div class="t" style="left:40.01px;top:315px;color:#0c0c0c;transform:scaleX(0.9787)">Руководитель отдела /Департамент продаж/, (РО...</div>
<div class="t" style="left:40.01px;top:344px;color:#0c0c0c;transform:scaleX(0.9809)">Менеджер по продажам /Департамент продаж/, (Р...</div>
<div class="t" style="left:386.31px;top:249px;color:#0e9b50;transform:scaleX(0.9698)">Показатели позиции "Руководитель департамента /Департамент продаж/, (РОМАШКА ООО)"</div>
<div class="t" style="left:400.67px;top:274px;color:#444;transform:scaleX(0.9524)">Добавить</div>
<div class="t" style="left:583.71px;top:274px;color:#444;transform:scaleX(0.9769)">Заполнить из вышестоящего</div>
<div class="t" style="left:1139.69px;top:274px;color:#444;transform:scaleX(1.0373)">Еще</div>
<div class="t" style="left:402.91px;top:306px;color:#4a4a4a;transform:scaleX(0.9548)">Показатель</div>
<div class="t" style="left:695.99px;top:306px;color:#4a4a4a;transform:scaleX(1.0275)">Вес</div>
<div class="t" style="left:759.90px;top:306px;color:#4a4a4a;transform:scaleX(0.9879)">Ввод значений</div>
<div class="t" style="left:402.91px;top:337px;color:#111;transform:scaleX(0.9616)">Повышение рентабельности продаж</div>
<div class="t" style="left:402.91px;top:366px;color:#0c0c0c;transform:scaleX(0.9718)">Снижение просроченной дебиторской за...</div>
<div class="t" style="left:402.91px;top:395px;color:#0c0c0c;transform:scaleX(0.9642)">Выполнение плана продаж</div>
<div class="t" style="left:402.91px;top:424px;color:#0c0c0c;transform:scaleX(0.9616)">Своевременное предоставление отчетно...</div>
<div class="t" style="left:720.02px;top:337px;color:#0c0c0c;transform:scaleX(0.9550)">3</div>
<div class="t" style="left:720.02px;top:366px;color:#0c0c0c;transform:scaleX(0.9550)">2</div>
<div class="t" style="left:720.02px;top:395px;color:#0c0c0c;transform:scaleX(0.9550)">4</div>
<div class="t" style="left:720.02px;top:424px;color:#0c0c0c;transform:scaleX(0.9550)">1</div>
<div class="t" style="left:760.28px;top:337px;color:#1c4fb4;transform:scaleX(0.9780);text-decoration:underline">Департамент продаж, вводят Кошкина Анфиса Валерьевна и Руд...</div>
<div class="t" style="left:760.28px;top:366px;color:#1c4fb4;transform:scaleX(0.9780);text-decoration:underline">Департамент продаж, вводят Кошкина Анфиса Валерьевна и Руд...</div>
<div class="t" style="left:760.28px;top:395px;color:#1c4fb4;transform:scaleX(0.9780);text-decoration:underline">Департамент продаж, вводят Кошкина Анфиса Валерьевна и Руд...</div>
<div class="t" style="left:759.91px;top:424px;color:#1c4fb4;transform:scaleX(0.9699);text-decoration:underline">Вводит Кошкина Анфиса Валерьевна</div>
<div class="t" style="left:386.31px;top:479px;color:#0e9b50;transform:scaleX(0.9628)">Шкала значений показателя "Повышение рентабельности продаж"</div>
<div class="t" style="left:400.67px;top:504px;color:#444;transform:scaleX(0.9524)">Добавить</div>
<div class="t" style="left:1139.69px;top:504px;color:#444;transform:scaleX(1.0373)">Еще</div>
<div class="t" style="left:481.22px;top:536px;color:#4a4a4a;transform:scaleX(0.9473)">Значение</div>
<div class="t" style="left:648.01px;top:536px;color:#4a4a4a;transform:scaleX(0.9606)">Оценка задается интервалом</div>
<div class="t" style="left:948.02px;top:536px;color:#4a4a4a;transform:scaleX(0.9476)">Оценка</div>
<div class="t" style="left:589.47px;top:567px;color:#111;transform:scaleX(0.9515)">до 5</div>
<div class="t" style="left:1061.79px;top:567px;color:#0c0c0c;transform:scaleX(0.9550)">100</div>
<div class="t" style="left:555.01px;top:596px;color:#0c0c0c;transform:scaleX(0.9704)">от 5 до 10</div>
<div class="t" style="left:1061.79px;top:596px;color:#0c0c0c;transform:scaleX(0.9550)">150</div>
<div class="t" style="left:547.81px;top:625px;color:#0c0c0c;transform:scaleX(0.9622)">от 10 до 20</div>
<div class="t" style="left:1061.79px;top:625px;color:#0c0c0c;transform:scaleX(0.9550)">200</div>
<div class="t" style="left:547.81px;top:654px;color:#0c0c0c;transform:scaleX(0.9622)">от 20 до 30</div>
<div class="t" style="left:1061.79px;top:654px;color:#0c0c0c;transform:scaleX(0.9550)">400</div>
<div class="t" style="left:547.81px;top:683px;color:#0c0c0c;transform:scaleX(0.9622)">от 30 до 50</div>
<div class="t" style="left:1061.79px;top:683px;color:#0c0c0c;transform:scaleX(0.9550)">550</div>
<div class="t" style="left:556.10px;top:712px;color:#0c0c0c;transform:scaleX(0.9847)">свыше 50</div>
<div class="t" style="left:1061.79px;top:712px;color:#0c0c0c;transform:scaleX(0.9550)">600</div>
<div class="t" style="left:12.01px;top:786px;color:#4a4a4a;transform:scaleX(0.9539)">Комментарий:</div>
<div class="t" style="left:534.71px;top:786px;color:#4a4a4a;transform:scaleX(0.9560)">Ответственный:</div>
<div class="t" style="left:638.21px;top:786px;color:#0c0c0c;transform:scaleX(0.9693)">Наумов Сергей Дмитриевич</div>
<svg style="left:0;top:0" width="1222" height="826" viewBox="0 0 1222 826"><path d="M1215.4 0.0 L1217.1 3.4 L1215.4 7.6 L1214.4 10.2 L1214.0 13.6 L1211.5 16.9 L1213.2 20.3 L1212.3 25.4 L1213.2 29.7 L1215.7 33.9 L1213.2 36.4 L1212.3 40.7 L1213.2 44.1 L1212.4 46.8 L1211.0 49.2 L1210.6 54.2 L1212.0 56.6 L1212.0 59.3 L1211.5 64.4 L1212.3 69.5 L1213.2 74.6 L1213.2 79.7 L1214.9 83.1 L1212.3 86.4 L1211.5 89.0 L1214.0 92.4 L1216.6 94.9 L1214.3 96.4 L1212.3 98.3 L1211.5 101.7 L1213.2 104.0 L1213.2 106.8 L1214.0 111.9 L1212.3 115.3 L1211.5 118.6 L1209.8 122.9 L1211.5 126.3 L1213.2 130.5 L1212.3 133.9 L1213.2 137.3 L1215.4 140.0 L1215.9 143.8 L1216.6 147.6 L1215.3 150.0 L1214.3 152.6 L1212.0 154.4 L1212.6 157.4 L1213.2 160.3 L1214.4 164.1 L1213.7 168.0 L1212.0 171.4 L1212.5 174.4 L1213.6 177.5 L1213.2 180.7 L1212.0 184.9 L1212.3 189.2 L1212.3 194.2 L1214.5 195.9 L1215.4 198.5 L1213.2 200.2 L1212.9 204.0 L1212.3 207.8 L1212.0 211.2 L1213.7 214.5 L1213.2 218.0 L1215.7 222.2 L1215.4 225.3 L1214.0 228.1 L1212.3 232.4 L1212.1 235.3 L1212.3 238.3 L1211.5 243.4 L1212.0 248.5 L1212.3 252.7 L1210.8 255.5 L1211.0 258.6 L1210.6 261.2 L1211.5 265.4 L1212.3 270.5 L1211.5 275.6 L1213.2 280.0 L1213.2 282.5 L1212.4 285.5 L1212.0 288.5 L1212.5 291.8 L1212.7 295.3 L1211.4 298.1 L1212.0 301.2 L1213.5 304.0 L1213.2 307.1 L1211.0 309.7 L1211.0 312.8 L1212.3 315.6 L1214.4 318.8 L1215.7 322.4 L1215.4 324.9 L1214.5 328.2 L1212.3 330.8 L1211.5 335.9 L1213.1 339.1 L1213.2 342.7 L1210.3 346.9 L1211.3 350.7 L1211.5 354.6 L1212.7 358.0 L1211.9 361.3 L1212.3 364.7 L1213.8 367.5 L1214.0 370.7 L1213.2 373.6 L1212.7 376.6 L1214.9 380.8 L1213.8 383.7 L1213.2 386.8 L1212.3 391.9 L1213.8 394.3 L1214.9 396.9 L1213.2 400.3 L1213.9 403.8 L1214.9 407.1 L1213.2 409.7 L1213.6 412.8 L1212.3 415.6 L1213.2 420.0 L1213.2 423.2 L1211.5 425.9 L1213.7 430.2 L1212.2 433.1 L1209.8 435.3 L1210.3 437.9 L1211.5 440.3 L1212.1 443.7 L1212.3 447.1 L1212.0 450.3 L1210.8 453.3 L1210.3 456.4 L1212.4 458.1 L1214.4 459.8 L1214.2 462.9 L1213.2 465.8 L1212.3 470.0 L1213.5 473.3 L1215.7 475.9 L1216.6 481.0 L1214.9 483.4 L1214.0 486.1 L1213.7 491.2 L1215.0 494.5 L1215.4 498.0 L1214.7 501.3 L1214.4 504.7 L1213.1 507.3 L1211.2 509.5 L1210.6 512.4 L1212.7 515.8 L1211.6 518.6 L1211.5 521.7 L1211.3 524.7 L1210.3 527.6 L1208.9 531.9 L1211.5 535.3 L1212.0 538.0 L1214.8 539.4 L1215.4 542.0 L1216.6 545.4 L1215.0 548.1 L1213.2 550.5 L1211.9 552.9 L1211.5 555.6 L1213.2 560.0 L1214.0 565.1 L1215.1 568.0 L1214.9 571.0 L1215.7 576.1 L1215.3 579.1 L1214.9 582.0 L1214.8 585.4 L1212.6 588.1 L1212.0 591.4 L1211.5 596.4 L1214.0 600.7 L1213.2 605.8 L1214.0 610.0 L1214.1 612.7 L1215.0 615.1 L1215.7 617.6 L1212.3 620.2 L1211.6 624.0 L1212.3 627.8 L1212.7 631.2 L1212.3 634.6 L1213.0 637.3 L1214.2 639.7 L1215.4 642.2 L1213.7 645.1 L1212.3 648.1 L1211.4 651.1 L1210.3 654.1 L1213.2 658.3 L1212.5 661.1 L1212.3 664.0 L1213.2 666.8 L1214.4 669.3 L1215.1 672.0 L1216.6 674.4 L1215.9 677.8 L1213.7 680.3 L1212.8 683.7 L1212.7 687.1 L1213.5 690.6 L1214.9 693.9 L1213.9 696.9 L1214.9 700.0 L1213.2 701.3 L1213.4 704.8 L1214.9 708.0 L1214.7 711.2 L1214.0 714.3 L1213.2 717.4 L1213.4 720.0 L1215.2 722.2 L1214.9 725.0 L1213.5 727.3 L1212.6 729.9 L1210.6 731.8 L1210.8 734.7 L1210.4 737.6 L1208.9 740.2 L1210.7 743.1 L1213.2 745.3 L1214.0 748.7 L1212.8 751.7 L1210.3 753.8 L1213.2 757.2 L1213.8 759.9 L1213.6 762.6 L1212.7 765.3 L1214.4 768.0 L1213.7 770.7 L1213.1 774.2 L1212.3 777.5 L1213.5 780.9 L1214.9 784.3 L1212.0 787.7 L1211.5 790.6 L1211.8 793.4 L1212.7 796.2 L1210.8 799.3 L1210.3 802.9 L1214.0 806.3 L1212.5 808.0 L1210.5 811.0 L1208.5 813.5 L1206.6 813.5 L1203.9 814.9 L1200.9 815.6 L1198.0 816.7 L1195.0 817.4 L1192.7 815.7 L1190.3 814.6 L1187.2 815.1 L1184.9 813.5 L1181.5 813.9 L1178.2 813.5 L1174.9 812.7 L1169.9 813.5 L1168.7 815.9 L1166.6 817.7 L1164.8 819.7 L1163.2 821.9 L1160.2 822.2 L1157.2 822.5 L1154.2 821.5 L1151.2 821.5 L1148.2 821.0 L1144.9 820.9 L1141.5 820.1 L1138.2 821.0 L1135.0 819.0 L1131.5 817.7 L1128.7 818.1 L1125.9 818.3 L1123.1 818.6 L1120.5 820.3 L1117.5 819.0 L1114.8 820.2 L1111.7 818.0 L1108.1 816.9 L1105.1 816.5 L1102.2 817.1 L1099.4 818.3 L1096.5 818.5 L1093.0 817.3 L1089.8 815.7 L1086.6 817.1 L1083.1 816.9 L1080.7 818.3 L1079.2 820.9 L1076.4 821.9 L1073.5 821.4 L1071.4 819.4 L1068.6 820.7 L1065.7 821.5 L1062.7 821.9 L1059.7 822.4 L1056.8 822.7 L1054.0 822.2 L1051.4 820.7 L1048.7 820.6 L1046.2 820.0 L1043.8 818.7 L1041.4 817.7 L1038.3 818.2 L1035.6 816.1 L1032.6 816.2 L1029.7 816.0 L1026.2 815.6 L1023.1 814.3 L1020.0 812.7 L1017.2 812.8 L1014.5 812.6 L1011.7 812.9 L1009.1 811.3 L1006.3 811.9 L1002.8 811.3 L999.6 812.7 L997.0 812.7 L994.3 812.6 L991.6 813.3 L988.9 813.2 L986.3 812.4 L984.2 814.3 L982.1 816.1 L979.6 817.4 L976.9 816.5 L974.0 817.7 L971.3 816.9 L968.1 816.6 L966.0 813.8 L962.9 813.5 L960.2 813.8 L957.7 814.9 L954.9 814.4 L952.3 815.8 L949.6 815.2 L946.2 816.2 L942.9 817.4 L940.1 817.3 L937.6 818.3 L935.2 819.5 L932.9 820.7 L929.5 820.7 L926.1 820.1 L922.8 819.4 L919.4 819.4 L916.3 817.5 L912.8 817.4 L910.4 815.8 L907.8 814.4 L904.3 815.1 L901.1 816.9 L898.4 817.5 L895.6 818.0 L892.8 817.7 L891.2 814.8 L888.6 812.7 L885.3 811.6 L881.9 812.4 L879.2 812.6 L876.7 813.7 L874.4 815.2 L871.2 814.0 L867.8 814.0 L864.4 813.5 L861.1 814.6 L857.7 814.0 L855.6 815.7 L853.6 817.4 L850.2 813.5 L846.5 813.8 L842.7 813.5 L840.2 815.4 L837.4 816.3 L834.4 816.4 L831.0 816.8 L827.7 816.4 L824.5 817.9 L821.0 818.5 L816.0 818.5 L813.1 818.0 L810.2 817.3 L807.3 818.1 L804.4 817.0 L801.5 816.7 L798.6 816.6 L795.6 817.4 L793.0 816.1 L790.6 814.4 L787.9 815.7 L784.9 816.6 L782.0 817.5 L778.9 817.7 L776.2 818.4 L773.4 817.7 L770.6 817.3 L767.8 817.6 L765.0 818.4 L762.2 818.5 L758.9 818.0 L755.6 817.4 L752.2 817.7 L750.1 819.7 L747.1 819.9 L744.4 820.7 L742.2 822.7 L740.3 820.8 L738.0 819.5 L735.5 818.5 L732.2 818.6 L728.9 818.5 L725.9 818.4 L723.4 816.5 L720.5 816.4 L717.8 817.1 L714.9 816.7 L712.2 817.7 L709.3 818.9 L707.8 821.8 L705.5 823.5 L702.6 822.3 L700.3 820.0 L697.1 819.4 L693.7 819.5 L690.6 821.1 L687.1 821.0 L684.2 819.8 L682.1 817.4 L679.2 818.1 L676.2 816.7 L673.3 817.0 L670.4 817.7 L667.5 818.4 L664.6 817.0 L661.7 816.7 L658.7 817.7 L656.1 817.6 L653.4 818.3 L650.7 818.1 L648.1 819.1 L645.4 818.5 L642.3 818.6 L640.1 816.0 L637.0 816.0 L634.1 816.1 L631.2 816.6 L628.2 816.2 L625.4 817.4 L622.8 815.8 L620.3 814.0 L617.2 814.9 L614.5 816.5 L612.0 818.5 L608.9 818.9 L605.8 818.7 L602.8 818.4 L599.7 818.4 L596.6 817.7 L593.9 817.6 L591.1 818.3 L588.3 818.0 L585.5 818.7 L582.7 817.2 L579.9 818.0 L576.7 819.8 L573.3 821.0 L570.7 819.3 L568.3 817.4 L565.6 817.4 L563.0 816.9 L560.4 818.0 L557.7 817.2 L555.1 818.2 L552.5 818.3 L549.9 818.5 L546.9 818.3 L543.8 819.2 L540.9 818.2 L537.8 818.5 L534.9 817.7 L532.2 818.6 L529.5 817.0 L526.8 818.2 L524.2 817.5 L521.5 817.4 L518.9 816.7 L516.2 816.9 L513.5 817.1 L510.8 816.5 L508.2 816.4 L505.2 816.5 L502.3 816.3 L499.5 817.9 L496.5 817.4 L493.9 819.5 L491.5 821.9 L488.7 821.1 L486.5 819.4 L483.6 820.0 L480.6 819.2 L477.7 820.0 L474.8 820.2 L472.0 820.2 L469.2 820.0 L466.4 819.8 L463.7 820.9 L460.9 820.7 L458.1 821.0 L455.2 820.4 L452.2 819.8 L449.4 818.8 L446.4 818.5 L443.8 819.5 L441.0 820.1 L438.4 821.1 L435.4 821.0 L433.0 822.7 L430.1 822.1 L427.3 821.5 L424.3 821.2 L421.4 821.9 L418.7 822.2 L416.0 821.4 L413.4 820.5 L410.7 820.5 L408.0 821.0 L405.3 821.8 L402.7 821.0 L399.1 820.8 L396.0 819.0 L393.2 819.3 L390.4 820.1 L387.6 819.4 L383.5 817.4 L380.5 817.9 L377.6 817.4 L374.7 818.6 L371.5 817.8 L368.4 818.5 L365.8 816.0 L362.6 814.4 L359.7 813.6 L356.7 814.4 L354.1 816.5 L350.9 817.4 L347.6 817.0 L344.2 817.3 L340.9 817.7 L338.3 819.2 L335.1 818.6 L332.5 820.2 L330.3 818.5 L327.4 819.1 L325.3 816.8 L322.5 816.9 L319.2 816.5 L315.8 815.7 L313.3 814.6 L311.2 812.6 L308.3 812.4 L305.5 813.5 L303.7 816.3 L300.8 817.4 L297.5 817.5 L294.1 817.3 L290.8 817.4 L288.1 815.7 L285.8 813.5 L283.1 813.3 L280.8 811.9 L276.6 812.4 L273.9 814.1 L270.8 815.2 L265.8 814.4 L263.0 815.7 L260.8 817.7 L257.8 817.0 L255.8 814.7 L252.9 815.3 L250.2 816.3 L247.4 816.9 L243.5 817.4 L239.9 816.0 L238.0 818.4 L235.5 820.0 L233.6 822.3 L231.5 824.4 L228.2 823.5 L225.7 821.0 L220.7 821.0 L218.0 819.8 L215.2 819.9 L212.3 820.2 L210.3 818.0 L207.3 817.4 L204.0 816.0 L200.3 815.2 L198.3 817.1 L195.9 818.0 L193.7 819.5 L190.7 819.4 L188.6 821.0 L185.7 821.1 L182.7 820.9 L179.9 819.9 L177.0 819.4 L173.9 817.3 L170.3 816.9 L167.4 816.8 L164.8 818.5 L161.9 818.5 L159.5 821.6 L156.1 823.5 L154.2 821.6 L151.6 820.9 L149.4 819.4 L146.9 818.5 L141.9 819.4 L139.4 821.2 L136.7 822.4 L133.6 822.7 L130.9 821.2 L127.9 820.6 L125.2 819.4 L121.9 820.2 L118.5 818.5 L115.2 819.4 L111.8 820.4 L108.5 821.9 L105.7 821.3 L102.9 822.7 L100.2 821.9 L96.9 820.9 L93.4 822.2 L90.1 821.0 L87.0 819.5 L83.4 819.5 L80.1 818.5 L76.8 818.9 L73.5 818.4 L70.1 818.5 L66.8 817.7 L63.4 819.0 L60.1 818.5 L56.6 818.4 L53.4 816.9 L51.4 814.6 L49.2 812.4 L46.9 813.7 L44.2 814.0 L41.5 813.9 L39.2 812.4 L36.7 815.1 L33.4 816.9 L30.4 817.2 L27.7 816.3 L25.0 815.2 L22.2 815.0 L19.4 814.5 L16.7 813.5 L13.0 812.6 L9.2 812.7 L6.5 815.1 L3.3 816.9 L0.0 816.0" fill="none" stroke="#000" stroke-width="1" stroke-dasharray="1.7 1.5" stroke-linecap="butt" shape-rendering="crispEdges"/></svg>
</body>
</html>
